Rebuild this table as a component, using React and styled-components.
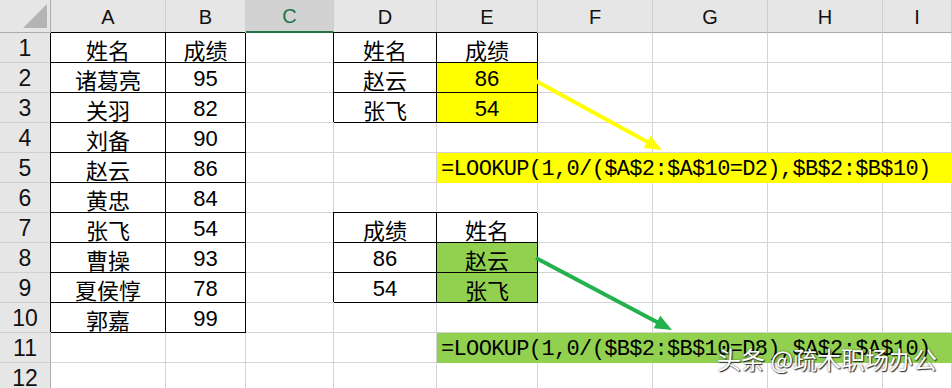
import React from "react";
import styled, { createGlobalStyle, css } from "styled-components";

const GlobalStyle = createGlobalStyle`
  *, *::before, *::after { box-sizing: border-box; }
  html, body { margin: 0; padding: 0; background: #fff; }
  body { overflow: hidden; }
`;

const COLS = ["A", "B", "C", "D", "E", "F", "G", "H", "I"];
const ROWS = 12;
const YELLOW = "#ffff00";
const GREEN = "#92d050";

// sheet contents, keyed by cell address
const cells = {
  A1: "姓名", B1: "成绩",
  A2: "诸葛亮", B2: "95",
  A3: "关羽", B3: "82",
  A4: "刘备", B4: "90",
  A5: "赵云", B5: "86",
  A6: "黄忠", B6: "84",
  A7: "张飞", B7: "54",
  A8: "曹操", B8: "93",
  A9: "夏侯惇", B9: "78",
  A10: "郭嘉", B10: "99",
  D1: "姓名", E1: "成绩",
  D2: "赵云", E2: "86",
  D3: "张飞", E3: "54",
  D7: "成绩", E7: "姓名",
  D8: "86", E8: "赵云",
  D9: "54", E9: "张飞",
};

const fills = { E2: YELLOW, E3: YELLOW, E8: GREEN, E9: GREEN };

// bordered ranges: [firstCol, lastCol, firstRow, lastRow]
const tables = [
  ["A", "B", 1, 10],
  ["D", "E", 1, 3],
  ["D", "E", 7, 9],
];

const bars = {
  5: { col: "E", fill: YELLOW, text: "=LOOKUP(1,0/($A$2:$A$10=D2),$B$2:$B$10)" },
  11: { col: "E", fill: GREEN, text: "=LOOKUP(1,0/($B$2:$B$10=D8),$A$2:$A$10)" },
};

const inTable = (col, row) =>
  tables.some(
    ([c1, c2, r1, r2]) =>
      COLS.indexOf(col) >= COLS.indexOf(c1) &&
      COLS.indexOf(col) <= COLS.indexOf(c2) &&
      row >= r1 &&
      row <= r2
  );

const Sheet = styled.div`
  position: relative;
  width: 952px;
  height: 388px;
  overflow: hidden;
  background: #fff;
  font-family: "Liberation Sans", "Noto Sans CJK SC", sans-serif;
`;

const Grid = styled.div`
  display: grid;
  grid-template-columns: 51px 115px 80px 88px 103px 101px 115px 115px 115px 69px;
  grid-template-rows: 33px repeat(${ROWS}, 30px);
`;

const Corner = styled.div`
  position: relative;
  background: #e6e6e6;
  border-right: 1px solid #ababab;
  border-bottom: 1px solid #ababab;

  &::after {
    content: "";
    position: absolute;
    right: 3px;
    bottom: 4px;
    width: 24px;
    height: 24px;
    background: #b4b4b4;
    clip-path: polygon(100% 0, 100% 100%, 0 100%);
  }
`;

const ColHead = styled.div`
  display: flex;
  align-items: center;
  justify-content: center;
  padding-top: 2px;
  background: #e6e6e6;
  border-right: 1px solid #cfcfcf;
  border-bottom: 1px solid #ababab;
  font-size: 20px;
  color: #111;

  ${({ $active }) =>
    $active &&
    css`
      background: #d2d2d2;
      color: #217346;
      border-bottom: 2px solid #217346;
    `}
`;

const RowHead = styled.div`
  display: flex;
  align-items: center;
  justify-content: center;
  padding-top: 1px;
  background: #e6e6e6;
  border-right: 1px solid #ababab;
  border-bottom: 1px solid #d0d0d0;
  font-size: 23px;
  color: #111;
`;

const Cell = styled.div`
  display: flex;
  align-items: center;
  justify-content: center;
  padding-top: 3px;
  background: ${({ $fill }) => $fill || "transparent"};
  border-right: 1px solid #d4d4d4;
  border-bottom: 1px solid #d4d4d4;
  font-size: 22px;
  color: #000;

  ${({ $boxed }) =>
    $boxed &&
    css`
      border-color: #000;
      box-shadow: -1px -1px 0 #000;
    `}
`;

const FormulaBar = styled.div`
  grid-column: span ${({ $span }) => $span};
  display: flex;
  align-items: center;
  padding: 2px 0 0 4px;
  background: ${({ $fill }) => $fill};
  font-family: "Liberation Mono", monospace;
  font-size: 22px;
  letter-spacing: -0.65px;
  color: #000;
  white-space: nowrap;
  overflow: hidden;
`;

const Overlay = styled.svg`
  position: absolute;
  left: 0;
  top: 0;
  pointer-events: none;
`;

const Watermark = styled.div`
  position: absolute;
  left: 717px;
  top: 347px;
  font-family: "Noto Sans CJK SC", sans-serif;
  font-size: 24px;
  line-height: 1;
  color: #fff;
  white-space: nowrap;
  text-shadow: 1px 1px 1px #2a2a2a, 0 0 2px rgba(0, 0, 0, 0.55);
`;

const Arrow = ({ x1, y1, x2, y2, color }) => {
  const len = Math.hypot(x2 - x1, y2 - y1);
  const ux = (x2 - x1) / len;
  const uy = (y2 - y1) / len;
  const head = 17;
  const half = 7;
  const bx = x2 - ux * head;
  const by = y2 - uy * head;
  const points = `${x2},${y2} ${bx - uy * half},${by + ux * half} ${bx + uy * half},${by - ux * half}`;
  return (
    <g>
      <line x1={x1} y1={y1} x2={bx + ux * 2} y2={by + uy * 2} stroke={color} strokeWidth={4} />
      <polygon points={points} fill={color} />
    </g>
  );
};

const renderRow = (row) => {
  const out = [<RowHead key={`h${row}`}>{row}</RowHead>];
  for (let i = 0; i < COLS.length; i++) {
    const col = COLS[i];
    const bar = bars[row];
    if (bar && bar.col === col) {
      out.push(
        <FormulaBar key={`${col}${row}`} $span={COLS.length - i} $fill={bar.fill}>
          {bar.text}
        </FormulaBar>
      );
      break;
    }
    const addr = `${col}${row}`;
    out.push(
      <Cell key={addr} $fill={fills[addr]} $boxed={inTable(col, row)}>
        {cells[addr]}
      </Cell>
    );
  }
  return out;
};

const App = () => {
  const rows = Array.from({ length: ROWS }, (_, i) => i + 1);
  return (
    <Sheet>
      <GlobalStyle />
      <Grid>
        <Corner />
        {COLS.map((c) => (
          <ColHead key={c} $active={c === "C"}>
            {c}
          </ColHead>
        ))}
        {rows.map(renderRow)}
      </Grid>
      <Overlay width="952" height="388">
        <Arrow x1={536} y1={81} x2={662} y2={150} color="#ffff00" />
        <Arrow x1={536} y1={258} x2={672} y2={330} color="#22b14c" />
      </Overlay>
      <Watermark>头条 @疏木职场办公</Watermark>
    </Sheet>
  );
};

export default App;
